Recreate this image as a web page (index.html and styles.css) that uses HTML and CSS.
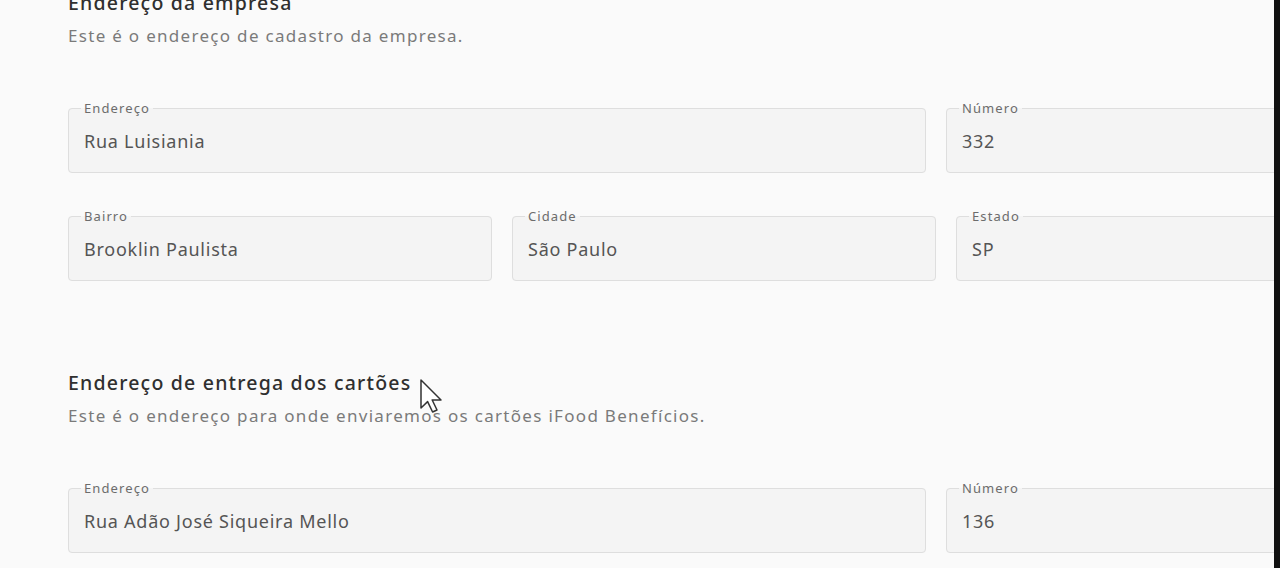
FILE: index.html
```html
<!DOCTYPE html>
<html lang="pt-BR">
<head>
<meta charset="utf-8">
<link rel="stylesheet" href="styles.css">
</head>
<body>
<div class="screen">
  <main class="page">
    <div class="content">
      <section class="section">
        <h2 class="title">Endereço da empresa</h2>
        <p class="subtitle">Este é o endereço de cadastro da empresa.</p>
        <div class="row row-addr">
          <fieldset class="field"><legend>Endereço</legend><div class="value">Rua Luisiania</div></fieldset>
          <fieldset class="field"><legend>Número</legend><div class="value">332</div></fieldset>
        </div>
        <div class="row row-three">
          <fieldset class="field"><legend>Bairro</legend><div class="value">Brooklin Paulista</div></fieldset>
          <fieldset class="field"><legend>Cidade</legend><div class="value">São Paulo</div></fieldset>
          <fieldset class="field"><legend>Estado</legend><div class="value">SP</div></fieldset>
        </div>
      </section>
      <section class="section section-second">
        <h2 class="title">Endereço de entrega dos cartões</h2>
        <p class="subtitle">Este é o endereço para onde enviaremos os cartões iFood Benefícios.</p>
        <div class="row row-addr">
          <fieldset class="field"><legend>Endereço</legend><div class="value">Rua Adão José Siqueira Mello</div></fieldset>
          <fieldset class="field"><legend>Número</legend><div class="value">136</div></fieldset>
        </div>
      </section>
    </div>
    <svg class="cursor" width="24" height="34" viewBox="0 0 24 34"><path d="M1 1 L1 29 L7.6 22.6 L12.6 33 L17 31 L12.2 21 L21 21 Z" fill="#fff" stroke="#333" stroke-width="1.5" stroke-linejoin="round"/></svg>
  </main>
  <div class="edge"></div>
</div>
</body>
</html>
```
FILE: styles.css
```css
html, body {
  margin: 0;
  padding: 0;
  height: 100%;
}
body {
  background: #fafafa;
  font-family: "Noto Sans", "Liberation Sans", sans-serif;
  color: #3e3e3e;
}
.screen {
  display: flex;
  height: 568px;
  overflow: hidden;
}
.page {
  position: relative;
  flex: 1;
  overflow: hidden;
  background: #fafafa;
}
.edge {
  width: 6px;
  background: #111;
}
.content {
  margin-top: -11px;
  padding-left: 68px;
  width: 1312px;
}
.section {
  display: flex;
  flex-direction: column;
}
.section-second {
  margin-top: 88px;
}
.title {
  margin: 0;
  font-size: 19.5px;
  line-height: 28px;
  font-weight: 500;
  color: #2f2f2f;
  letter-spacing: 1.2px;
}
.subtitle {
  margin: 7px 0 0;
  font-size: 17px;
  line-height: 24px;
  color: #7a7a7a;
  letter-spacing: 1.3px;
}
.row {
  display: grid;
  gap: 20px;
  margin-top: 53px;
}
.row + .row {
  margin-top: 36px;
}
.row-addr {
  grid-template-columns: 858px 434px;
}
.row-three {
  grid-template-columns: 424px 424px 424px;
}
.field {
  margin: 0;
  padding: 0 15px;
  border: 1px solid #dedede;
  border-radius: 4px;
  background: #f4f4f4;
  min-width: 0;
  height: 72px;
  box-sizing: border-box;
}
.field legend {
  padding: 0 3px;
  margin-left: -3px;
  font-size: 13px;
  line-height: 14px;
  color: #6c6c6c;
  letter-spacing: 1.1px;
}
.value {
  margin-top: 14px;
  font-size: 18px;
  line-height: 24px;
  color: #555;
  letter-spacing: 0.75px;
}
.cursor {
  position: absolute;
  left: 420px;
  top: 379px;
}
```
